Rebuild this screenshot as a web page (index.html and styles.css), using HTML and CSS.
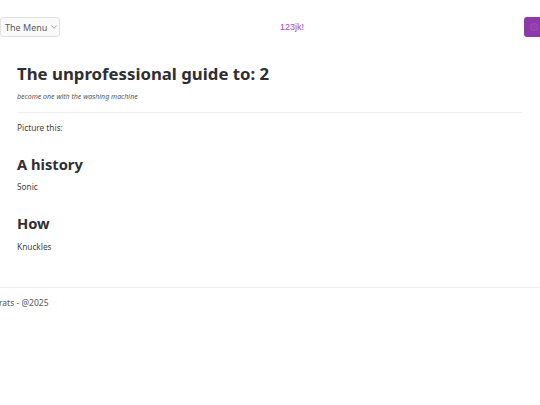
FILE: index.html
```html
<!DOCTYPE html>
<html>
<head>
<meta charset="utf-8">
<link rel="stylesheet" href="styles.css">
</head>
<body>
<header class="topbar">
  <button class="menu-btn">The Menu <svg class="chev" width="6" height="4" viewBox="0 0 6 4"><path d="M0.5 0.8 L3 3.2 L5.5 0.8" fill="none" stroke="#888" stroke-width="0.8"/></svg></button>
  <div class="brand">123jk!</div>
  <button class="action-btn"><svg width="8" height="8" viewBox="0 0 8 8"><rect x="1" y="1" width="6" height="6" rx="1" fill="none" stroke="#a35bbd" stroke-width="0.8"/><path d="M3 4 H6" stroke="#a35bbd" stroke-width="0.8"/></svg></button>
</header>
<main class="content">
  <h1 class="title">The unprofessional guide to: 2</h1>
  <p class="subtitle">become one with the washing machine</p>
  <hr class="divider">
  <p class="text first">Picture this:</p>
  <h2 class="section">A history</h2>
  <p class="text">Sonic</p>
  <h2 class="section">How</h2>
  <p class="text last">Knuckles</p>
</main>
<footer class="footer">
  <p class="foot-text">rats - @2025</p>
</footer>
</body>
</html>
```
FILE: styles.css
```css
html, body {
  margin: 0;
  padding: 0;
  background: #ffffff;
  font-family: "Noto Sans", "Open Sans", sans-serif;
  color: #333;
}
body {
  width: 540px;
  overflow: hidden;
}
.topbar {
  display: flex;
  align-items: center;
  justify-content: space-between;
  padding-top: 17px;
  height: 20px;
}
.menu-btn {
  display: flex;
  align-items: center;
  gap: 4px;
  height: 20px;
  width: 60px;
  padding: 0 0 0 4px;
  margin: 0;
  background: #fafafa;
  border: 1px solid #e2e2e2;
  border-radius: 3px;
  font-family: "Noto Sans", sans-serif;
  font-size: 9px;
  color: #5a5a5a;
}
.brand {
  font-family: "Liberation Sans", Arial, sans-serif;
  font-size: 9px;
  color: #a545c2;
}
.action-btn {
  width: 20px;
  height: 20px;
  margin: 0 -4px 0 0;
  padding: 0;
  border: none;
  border-radius: 3px;
  background: #8e38ab;
  display: flex;
  align-items: center;
  justify-content: center;
}
.content {
  padding: 0 18px 0 17px;
  margin-top: 25px;
  padding-bottom: 34px;
  border-bottom: 1px solid #f0f0f0;
}
.title {
  margin: 0;
  font-size: 16.8px;
  font-weight: 700;
  color: #2d2f33;
  line-height: 24px;
}
.subtitle {
  margin: 6px 0 0;
  font-size: 7px;
  font-style: italic;
  color: #555;
  line-height: 10px;
}
.divider {
  margin: 10px 0 0;
  border: none;
  border-top: 1px solid #f0f0f0;
  height: 0;
}
.text {
  margin: 8px 0 0;
  font-size: 8.3px;
  line-height: 12px;
  color: #444;
}
.text.first {
  margin-top: 9px;
}
.section {
  margin: 20px 0 0;
  font-size: 14.7px;
  font-weight: 700;
  color: #2d2f33;
  line-height: 20px;
}
.section + .text {
  margin-top: 7px;
}
.section + .text.last {
  margin-top: 8px;
}
.footer {
  padding-top: 9px;
}
.foot-text {
  margin: 0;
  font-size: 8.5px;
  color: #555;
  line-height: 12px;
  margin-left: -1px;
}
```
